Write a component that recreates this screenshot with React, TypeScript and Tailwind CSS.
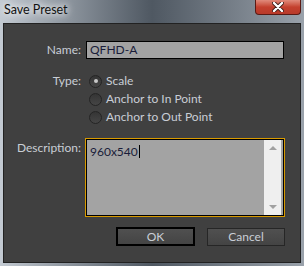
import React from 'react';

const font = { fontFamily: 'Lato, "Open Sans", sans-serif' };

function Radio({ checked, label }: { checked?: boolean; label: string }) {
  return (
    <div className="flex h-[18px] items-center">
      <span className="flex h-[13px] w-[13px] items-center justify-center rounded-full border border-[#242424] bg-gradient-to-b from-[#353535] to-[#454545]">
        {checked && <span className="h-[4px] w-[4px] rounded-full bg-[#c8c8c8]" />}
      </span>
      <span className="ml-[4px] text-[#c9ced6]">{label}</span>
    </div>
  );
}

export default function App() {
  return (
    <div
      className="flex h-[266px] w-[304px] flex-col bg-gradient-to-r from-[#c3cad2] via-[#4f5862] to-[#9aa2ab] text-[12px] leading-none"
      style={font}
    >
      {/* Title bar */}
      <div className="flex h-[23px] items-start justify-between">
        <span className="ml-[4px] mt-[4px] text-[12.5px] text-[#111] [text-shadow:0_0_6px_#fff,0_0_10px_#fff]">
          Save Preset
        </span>
        <div className="mr-[3px] flex h-[15px] w-[46px] items-center justify-center rounded-b-[4px] border border-t-0 border-[#5a1a14] bg-gradient-to-b from-[#e08a7c] via-[#c4402e] to-[#b83a2a]">
          <svg width="12" height="10" viewBox="0 0 12 10">
            <path d="M2 1 L10 9 M10 1 L2 9" stroke="#3a1a16" strokeWidth="4" strokeLinecap="round" />
            <path d="M2 1 L10 9 M10 1 L2 9" stroke="#fff" strokeWidth="2.4" strokeLinecap="round" />
          </svg>
        </div>
      </div>

      {/* Dialog body */}
      <div className="mx-[3px] mb-[3px] flex-1 border border-[#222] bg-[#404040]">
        {/* Name */}
        <div className="mt-[17px] flex items-center">
          <span className="w-[77px] text-right text-[#c9ced6]">Name:</span>
          <div className="ml-[5px] flex h-[18px] w-[198px] items-center border border-black bg-[#a3a3a3] pl-[3px] text-[#1a1d3a]">
            QFHD-A
          </div>
        </div>

        {/* Type */}
        <div className="mt-[13px] flex">
          <span className="mt-[3px] w-[77px] text-right text-[#c9ced6]">Type:</span>
          <div className="ml-[8px] flex flex-col">
            <Radio checked label="Scale" />
            <Radio label="Anchor to In Point" />
            <Radio label="Anchor to Out Point" />
          </div>
        </div>

        {/* Description */}
        <div className="mt-[12px] flex">
          <span className="mt-[4px] w-[77px] text-right text-[#c9ced6]">Description:</span>
          <div className="ml-[4px] flex h-[79px] w-[200px] border border-[#d89a00]">
            <div className="flex flex-1 border border-black bg-[#a3a3a3]">
              <div className="flex-1 pl-[3px] pt-[3px] text-[#1a1d3a]">
                960x540<span className="ml-[1px] inline-block h-[13px] w-px translate-y-[2px] bg-black" />
              </div>
              <div className="mr-[2px] flex w-[17px] flex-col items-center justify-between bg-[#efefef] py-[6px]">
                <svg width="8" height="4" viewBox="0 0 8 4">
                  <path d="M0 4 L4 0 L8 4 Z" fill="#a0a0a0" />
                </svg>
                <svg width="8" height="4" viewBox="0 0 8 4">
                  <path d="M0 0 L4 4 L8 0 Z" fill="#a0a0a0" />
                </svg>
              </div>
            </div>
          </div>
        </div>

        {/* Buttons */}
        <div className="mt-[10px] flex items-start">
          <button className="ml-[112px] flex h-[19px] w-[79px] items-center justify-center border-2 border-black bg-gradient-to-b from-[#505050] to-[#444] text-[#c9ced6]">
            OK
          </button>
          <button className="ml-[12px] mt-[1px] flex h-[18px] w-[78px] items-center justify-center border border-[#262626] bg-gradient-to-b from-[#505050] to-[#444] text-[#c9ced6]">
            Cancel
          </button>
        </div>
      </div>
    </div>
  );
}
